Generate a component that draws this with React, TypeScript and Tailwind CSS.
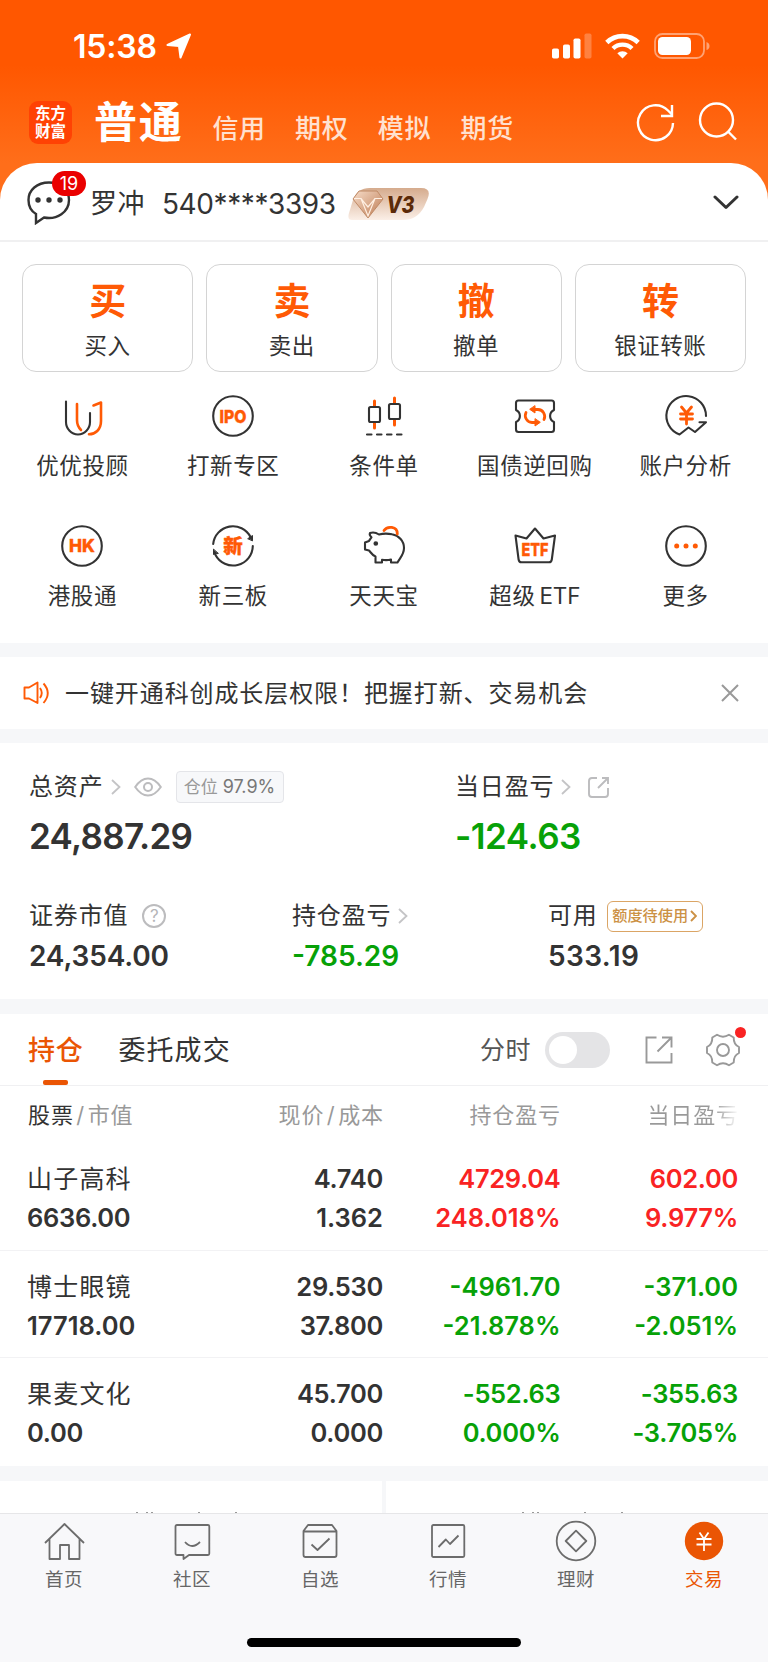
import type { ReactNode } from "react";

const DARK = "#333333";
const ORANGE = "#ff5a05";

function Svg({ size = 44, children }: { size?: number; children: ReactNode }) {
  return (
    <svg width={size} height={size} viewBox="0 0 44 44" fill="none" stroke={DARK} strokeWidth="2.1" strokeLinecap="round" strokeLinejoin="round" className="shrink-0">
      {children}
    </svg>
  );
}

function IconWord({ children, y, size, length }: { children: string; y: number; size: number; length: number }) {
  return (
    <text x="22" y={y} textAnchor="middle" textLength={length} lengthAdjust="spacingAndGlyphs" fontSize={size} fontWeight="800" fill={ORANGE} stroke={ORANGE} strokeWidth="0.4">
      {children}
    </text>
  );
}

const shortcuts: { label: ReactNode; icon: ReactNode }[] = [
  {
    label: "优优投顾",
    icon: (
      <Svg>
        <path d="M6 7.500V28A12 12.500 0 0 0 30 28V19" />
        <path stroke={ORANGE} strokeWidth="2.600" d="M17 10V26C17 31 18.500 33.500 21 36M33.500 11.500L41 8.500V27C41 36 35 40.300 29 40.300" />
      </Svg>
    ),
  },
  {
    label: "打新专区",
    icon: (
      <Svg>
        <circle cx="22" cy="22" r="19.800" />
        <IconWord y={28.6} size={18} length={27}>IPO</IconWord>
      </Svg>
    ),
  },
  {
    label: "条件单",
    icon: (
      <Svg>
        <path stroke={ORANGE} strokeWidth="3" d="M12.500 7V12M12.500 29V34M32.500 4V9M32.500 25.500V31" />
        <rect x="7" y="13" width="11" height="15" rx="1.500" />
        <rect x="27" y="10" width="11" height="15" rx="1.500" />
        <path d="M5 40.500H9.500M15 40.500H19.500M25 40.500H29.500M35 40.500H39.500" />
      </Svg>
    ),
  },
  {
    label: "国债逆回购",
    icon: (
      <Svg>
        <path d="M5.500 6.500H38.500Q41 6.500 41 9V16C35.800 18.500 35.800 25.500 41 28V35.500Q41 38 38.500 38H5.500Q3 38 3 35.500V28C8.200 25.500 8.200 18.500 3 16V9Q3 6.500 5.500 6.500Z" />
        <path stroke={ORANGE} strokeWidth="2.800" d="M19 15.500H25A7 7 0 0 1 31 25.500M25 28.500H19A7 7 0 0 1 13 18.500" />
        <path fill={ORANGE} stroke={ORANGE} strokeWidth="1" d="M22 12V19L17 15.500ZM22 25V32L27 28.500Z" />
      </Svg>
    ),
  },
  {
    label: "账户分析",
    icon: (
      <Svg>
        <path d="M42 22A19.800 19.800 0 1 0 15.500 40.500L24.500 33.500L31 38L42 28.300H35.500" />
        <path stroke={ORANGE} strokeWidth="2.800" d="M17.500 13L22.500 19L27.500 13M16.500 20H28.500M16.500 25H28.500M22.500 20V30" />
      </Svg>
    ),
  },
  {
    label: "港股通",
    icon: (
      <Svg>
        <circle cx="22" cy="22" r="19.800" />
        <IconWord y={28.4} size={18} length={26}>HK</IconWord>
      </Svg>
    ),
  },
  {
    label: "新三板",
    icon: (
      <Svg>
        <path d="M2.200 20A19.800 19.800 0 0 1 39.500 13M41.800 22A19.800 19.800 0 0 1 4.500 31" />
        <path fill={DARK} strokeWidth="1" d="M37 14.500L41.500 11.500V16.500ZM7 29.500L2.500 30.500V25.500Z" />
        <IconWord y={29} size={19.5} length={19.5}>新</IconWord>
      </Svg>
    ),
  },
  {
    label: "天天宝",
    icon: (
      <Svg>
        <path d="M8 9C11 8 14 8.500 17 10.500C21 9.500 26 9.500 30 10.300C37 11.500 42 17 42 24C42 30 39.500 32 35.500 38.500H29V35.500C26 36.300 23 36.300 20 35.800V38.500H13.500V32.500C10 31 8.500 28 7 26.500L3 25.500V18.500L7 17C8 15 9 14 9.500 13.200C7.500 11.500 7.500 10 8 9Z" />
        <circle cx="13.800" cy="19.500" r="1.300" fill={DARK} />
        <path stroke={ORANGE} strokeWidth="2.800" d="M22 6.500C25 1.800 35.500 2 35.300 10" />
      </Svg>
    ),
  },
  {
    label: (
      <>
        超级<span className="ml-[4px] tracking-[-0.200px]">ETF</span>
      </>
    ),
    icon: (
      <Svg>
        <path d="M2.500 11.500L13.500 14.500L22 4.500L30.500 14.500L42 11.500L38.800 35.500Q38.400 38.300 36 38.300H8.500Q6 38.300 5.600 35.500Z" />
        <IconWord y={31.6} size={18} length={27}>ETF</IconWord>
      </Svg>
    ),
  },
  {
    label: "更多",
    icon: (
      <Svg>
        <circle cx="22" cy="22" r="19.800" />
        <g fill={ORANGE} stroke="none">
          <circle cx="12.700" cy="22" r="2.500" />
          <circle cx="22" cy="22" r="2.500" />
          <circle cx="31.300" cy="22" r="2.500" />
        </g>
      </Svg>
    ),
  },
];

const trades = [
  ["买", "买入"],
  ["卖", "卖出"],
  ["撤", "撤单"],
  ["转", "银证转账"],
];

const holdings = [
  { name: "山子高科", value: "6636.00", price: "4.740", cost: "1.362", pl: "4729.04", plRate: "248.018%", day: "602.00", dayRate: "9.977%", up: true },
  { name: "博士眼镜", value: "17718.00", price: "29.530", cost: "37.800", pl: "-4961.70", plRate: "-21.878%", day: "-371.00", dayRate: "-2.051%", up: false },
  { name: "果麦文化", value: "0.00", price: "45.700", cost: "0.000", pl: "-552.63", plRate: "0.000%", day: "-355.63", dayRate: "-3.705%", up: false },
];

const tabs: { label: string; icon: ReactNode }[] = [
  { label: "首页", icon: <path d="M3 24L22.500 5L42 24M7.500 20V40H18V26H27V40H37.500V20" /> },
  { label: "社区", icon: <path d="M7 6H38Q39.300 6 39.300 7.500V34.500Q39.300 36 38 36H19L13.500 40V36H7Q5.500 36 5.500 34.500V7.500Q5.500 6 7 6ZM15 23Q22 31 30 23" /> },
  { label: "自选", icon: <path d="M5.500 12L10 6H34L38.500 12V36Q38.500 38 36.500 38H7.500Q5.500 38 5.500 36ZM6 12.500H38M13.500 25.500L19.500 31L31.500 19.500" /> },
  { label: "行情", icon: <path d="M7.500 6H37Q38.300 6 38.300 7.500V36.500Q38.300 38 37 38H7.500Q6 38 6 36.500V7.500Q6 6 7.500 6ZM12.500 28L19.800 20.500L24 25L32.500 16.500" /> },
  { label: "理财", icon: <path d="M41.300 22A19.300 19.300 0 1 1 2.700 22A19.300 19.300 0 1 1 41.300 22ZM22 11.700L32.300 22L22 32.300L11.700 22Z" /> },
  {
    label: "交易",
    icon: (
      <>
        <circle cx="22" cy="22" r="19.200" fill="#ea5504" stroke="none" />
        <path stroke="#ffffff" d="M17.500 13.500L22 20L26.500 13.500M14.500 20H29.500M14.500 25.500H29.500M22 20V32" />
      </>
    ),
  },
];

function Chevron() {
  return (
    <svg width="10" height="16" viewBox="0 0 10 16" fill="none" stroke="#c4c4c6" strokeWidth="1.800" className="shrink-0">
      <path d="M1 1L8.500 8L1 15" />
    </svg>
  );
}

function Label({ children }: { children: ReactNode }) {
  return <span className="whitespace-nowrap text-[24px] tracking-[0.850px]">{children}</span>;
}

function Slash() {
  return <span className="mx-[2.500px]">/</span>;
}

/* The digit 1 is narrow, so only figures without one are tightened. */
function Figure({ children, tone = "" }: { children: string; tone?: string }) {
  return <span className={tone + (children.includes("1") ? " tracking-[0px]" : " tracking-[-0.300px]")}>{children}</span>;
}

export default function App() {
  return (
    <div className="flex h-[1662px] w-[768px] flex-col overflow-hidden bg-white font-['Inter','Noto_Sans_CJK_SC',sans-serif] text-[#333333]">
      <div className="h-[242px] shrink-0 bg-[linear-gradient(180deg,#ff5700_0px,#ff5700_65px,#ff6e1a_163px,#ff6e1a_205px)]">
        <div className="flex h-[90px] items-center pl-[73px] pr-[58px] pt-[2px]">
          <span className="pt-[2px] text-[32px] font-semibold leading-[40px] tracking-[-0.200px] text-white">15:38</span>
          <svg width="26" height="26" viewBox="0 0 26 26" className="ml-[9px]" fill="#ffffff" stroke="#ffffff" strokeWidth="2" strokeLinejoin="round">
            <path d="M24 1.500L14.500 24.500L13 13L1.500 12Z" />
          </svg>
          <svg width="40" height="26" viewBox="0 0 40 26" fill="#ffffff" className="ml-auto">
            <rect x="0" y="15.500" width="7" height="10" rx="1.800" />
            <rect x="11" y="11.500" width="7" height="14" rx="1.800" />
            <rect x="21.500" y="5.500" width="7" height="20" rx="1.800" />
            <rect x="32.500" y="0.500" width="7" height="25" rx="1.800" opacity="0.250" />
          </svg>
          <svg width="35" height="26" viewBox="0 0 35 26" fill="none" stroke="#ffffff" className="ml-[13px]">
            <path strokeWidth="4.600" d="M1.800 9.500A22.500 22.500 0 0 1 33.200 9.500" />
            <path strokeWidth="4.400" d="M8 15.500A13.600 13.600 0 0 1 27 15.500" />
            <path fill="#ffffff" stroke="none" d="M12.300 20.300A7.600 7.600 0 0 1 22.700 20.300L17.500 25.600Z" />
          </svg>
          <svg width="56" height="26" viewBox="0 0 56 26" fill="none" className="ml-[14px]">
            <rect x="1" y="1" width="49" height="24" rx="7.500" stroke="#ffffff" strokeOpacity="0.450" strokeWidth="1.800" />
            <rect x="4" y="4" width="33" height="18" rx="4.500" fill="#ffffff" />
            <path d="M52.500 9Q55.500 10 55.500 13Q55.500 16 52.500 17Z" fill="#ffffff" fillOpacity="0.450" />
          </svg>
        </div>
        <div className="flex h-[73px] items-start pl-[29px] pr-[30px]">
          <div className="mt-[11px] flex h-[43px] w-[43px] flex-col items-center justify-center rounded-[9px] bg-[#ff4204] text-[15.500px] font-bold leading-[18px] text-white">
            <span>东方</span>
            <span>财富</span>
          </div>
          <span className="ml-[22px] mt-[7px] text-[43px] font-bold leading-[50px] tracking-[1.700px] text-white">普通</span>
          <div className="ml-[29px] mt-[20px] flex gap-[29.300px] text-[26px] font-medium leading-[38px] tracking-[0.700px] text-[#ffe1d0]">
            <span>信用</span>
            <span>期权</span>
            <span>模拟</span>
            <span>期货</span>
          </div>
          <svg width="40" height="40" viewBox="0 0 40 40" fill="none" stroke="#ffffff" strokeWidth="2.400" className="ml-auto mt-[12px]">
            <path d="M38 21A17.500 17.500 0 1 1 33 8.500L37 12.500M37 3V14H26" />
          </svg>
          <svg width="40" height="40" viewBox="0 0 40 40" fill="none" stroke="#ffffff" strokeWidth="2.400" className="ml-[23px] mt-[12px]">
            <circle cx="18.500" cy="18" r="16.500" />
            <path d="M30 29.500L38 37.500" />
          </svg>
        </div>
        <div className="flex h-[79px] items-center rounded-t-[37px] border-b-2 border-[#f0f0f1] bg-white pl-[26px] pr-[29px] pt-[3px]">
          <div className="relative -mt-px h-[44px] w-[46px] shrink-0">
            <svg width="46" height="44" viewBox="0 0 46 44" fill="none" stroke={DARK} strokeWidth="2.400">
              <path d="M23 1.500C11 1.500 2.500 9 2.500 19C2.500 25 5 30 10 33V42L18 36.500C31 39 43 31 43 19C43 9 34.500 1.500 23 1.500Z" />
              <g fill={DARK} stroke="none">
                <circle cx="12" cy="19" r="2.700" />
                <circle cx="23" cy="19" r="2.700" />
                <circle cx="34" cy="19" r="2.700" />
              </g>
            </svg>
            <span className="absolute -top-[10px] left-[26px] flex h-[25px] w-[34px] items-center justify-center rounded-full bg-[#ea0000] text-[18px] text-white">19</span>
          </div>
          <span className="ml-[18px] pt-px text-[27px] leading-[38px] tracking-[0.500px]">罗冲</span>
          <span className="ml-[17px] pt-px text-[28px] leading-[38px] tracking-[-0.400px]">540****3393</span>
          <svg width="83" height="33" viewBox="0 0 83 33" className="ml-[12px]">
            <defs>
              <linearGradient id="tier" x1="0" y1="0" x2="0" y2="1">
                <stop offset="0" stopColor="#d5ab8d" />
                <stop offset="1" stopColor="#fbefe7" />
              </linearGradient>
              <linearGradient id="gem" x1="0" y1="0" x2="1" y2="1">
                <stop offset="0" stopColor="#f6dcc8" />
                <stop offset="1" stopColor="#bd7a52" />
              </linearGradient>
            </defs>
            <path fill="url(#tier)" d="M22 1H73Q84 1 79.500 12L76 20Q69 33 55 33H4Q-1 33 1 26L5 13Q9 1 22 1Z" />
            <path fill="url(#gem)" stroke="#c08a66" strokeWidth="1" d="M11 4H29L35 12L20 31L5 12Z" />
            <path fill="none" stroke="#fff0e3" strokeWidth="1.200" d="M6 11.500H13L20 20L27 11.500H34M13 11.500L20 29L27 11.500" />
            <text x="38.500" y="25.500" fontSize="23" fontWeight="800" fontStyle="italic" fill="#5c2a08" textLength="28" lengthAdjust="spacingAndGlyphs">V3</text>
          </svg>
          <svg width="26" height="16" viewBox="0 0 26 16" fill="none" stroke={DARK} strokeWidth="3" strokeLinecap="round" strokeLinejoin="round" className="ml-auto">
            <path d="M2 2L13 12.500L24 2" />
          </svg>
        </div>
      </div>

      <div className="flex h-[130px] shrink-0 gap-[13px] px-[22px] pt-[22px]">
        {trades.map(([mark, label]) => (
          <div key={label} className="flex h-[108px] flex-1 flex-col items-center rounded-[14px] border border-[#d4d4d4]">
            <span className="mt-[15px] text-[37px] font-bold leading-[44px] text-[#ff5a05]">{mark}</span>
            <span className="mt-[7px] text-[22.500px] leading-[30px] tracking-[0.500px]">{label}</span>
          </div>
        ))}
      </div>

      <div className="grid h-[271px] shrink-0 auto-rows-[129.500px] grid-cols-5 px-[7px] pt-[22px]">
        {shortcuts.map((s, i) => (
          <div key={i} className="flex flex-col items-center">
            {s.icon}
            <span className="mt-[13px] whitespace-nowrap text-[22.500px] leading-[30px] tracking-[0.600px]">{s.label}</span>
          </div>
        ))}
      </div>

      <div className="flex h-[100px] shrink-0 items-center border-y-[14px] border-[#f6f7f9] pl-[23px] pr-[29px]">
        <svg width="26" height="24" viewBox="0 0 26 24" fill="none" stroke={ORANGE} strokeWidth="1.900" strokeLinejoin="round">
          <path d="M1.500 6.500H6L14.500 1.500V22L6 17.500H1.500ZM17 7Q20.500 12 17 17M20.500 2.500Q29 12 20.500 22" />
        </svg>
        <span className="ml-[16px] whitespace-nowrap pt-px text-[24px] leading-[36px] tracking-[0.910px]">一键开通科创成长层权限！把握打新、交易机会</span>
        <svg width="18" height="18" viewBox="0 0 18 18" stroke="#999999" strokeWidth="2" className="ml-auto">
          <path d="M1 1L17 17M17 1L1 17" />
        </svg>
      </div>

      <div className="h-[256px] shrink-0 pt-[27px] leading-[34px]">
        <div className="flex">
          <div className="w-[427px] pl-[29px]">
            <div className="flex h-[34px] items-center">
              <Label>总资产</Label>
              <span className="ml-[7px]"><Chevron /></span>
              <svg width="28" height="20" viewBox="0 0 28 20" fill="none" stroke="#bcbcbe" strokeWidth="2" className="ml-[13px]">
                <path d="M1.200 10Q7 1.500 14 1.500Q21 1.500 26.800 10Q21 18.500 14 18.500Q7 18.500 1.200 10Z" />
                <circle cx="14" cy="10" r="4" />
              </svg>
              <span className="ml-[14px] flex h-[32px] w-[108px] items-center justify-center whitespace-nowrap rounded-[4px] border border-[#e4e5e9] bg-[#f7f8fa] text-[17px] text-[#999999]">
                仓位&nbsp;<span className="text-[18px] text-[#777777]">97.9%</span>
              </span>
            </div>
            <div className="mt-[12px] text-[35px] font-semibold leading-[40px] tracking-[-0.700px]">24,887.29</div>
          </div>
          <div className="flex-1 pl-[28px]">
            <div className="flex h-[34px] items-center">
              <Label>当日盈亏</Label>
              <span className="ml-[7px]"><Chevron /></span>
              <svg width="21" height="21" viewBox="0 0 21 21" fill="none" stroke="#bcbcbe" strokeWidth="1.900" className="ml-[17px]">
                <path d="M9 1H4Q1 1 1 4V17Q1 20 4 20H17Q20 20 20 17V11M10 11L19.500 1.500M14 1H20V7" />
              </svg>
            </div>
            <div className="mt-[12px] text-[35px] font-semibold leading-[40px] tracking-[-0.500px] text-[#07a107]">-124.63</div>
          </div>
        </div>
        <div className="mt-[43px] flex">
          <div className="w-[264px] pl-[29px]">
            <div className="flex h-[34px] items-center">
              <Label>证券市值</Label>
              <span className="ml-[14px] flex h-[24px] w-[24px] items-center justify-center rounded-full border-2 border-[#bcbcbe] text-[17px] text-[#b5b5b7]">?</span>
            </div>
            <div className="mt-[6px] text-[28px] font-semibold tracking-[-0.150px]">24,354.00</div>
          </div>
          <div className="w-[256px] pl-[28px]">
            <div className="flex h-[34px] items-center">
              <Label>持仓盈亏</Label>
              <span className="ml-[7px]"><Chevron /></span>
            </div>
            <div className="mt-[6px] text-[28px] font-semibold text-[#07a107]">-785.29</div>
          </div>
          <div className="pl-[28px]">
            <div className="flex h-[34px] items-center">
              <Label>可用</Label>
              <span className="ml-[9px] flex h-[31px] w-[96px] items-center justify-center gap-[2px] rounded-[6px] border border-[#dba565] text-[15.200px] font-medium text-[#cc9145]">
                额度待使用
                <svg width="7" height="12" viewBox="0 0 7 12" fill="none" stroke="#cc9145" strokeWidth="1.900">
                  <path d="M1 1L6 6L1 11" />
                </svg>
              </span>
            </div>
            <div className="mt-[6px] text-[28px] font-semibold tracking-[0.400px]">533.19</div>
          </div>
        </div>
      </div>

      <div className="flex h-[87px] shrink-0 items-center border-b border-t-[15px] border-b-[#f0f0f2] border-t-[#f6f7f9] pl-[28px] pr-[28px]">
        <div className="relative flex h-full items-center pt-[3px] text-[27px] font-medium tracking-[0.700px] text-[#ea5504]">
          持仓
          <span className="absolute bottom-0 left-[15px] h-[5px] w-[25px] rounded-[2px] bg-[#ea5504]" />
        </div>
        <span className="ml-[35px] pt-[3px] text-[27px] tracking-[1.100px]">委托成交</span>
        <span className="ml-auto pt-[2px] text-[25px] tracking-[0.500px] text-[#555555]">分时</span>
        <span className="ml-[14px] flex h-[36px] w-[65px] items-center rounded-full bg-[#e4e4e6] pl-[4px]">
          <span className="h-[28px] w-[28px] rounded-full bg-white" />
        </span>
        <svg width="28" height="28" viewBox="0 0 28 28" fill="none" stroke="#999999" strokeWidth="1.900" className="ml-[35px]">
          <path d="M11.500 1.500H1.500V26.500H26.500V17M12.500 15.500L26 2M17 1.500H26.500V11.500" />
        </svg>
        <div className="relative ml-[33px] h-[34px] w-[34px]">
          <svg width="34" height="34" viewBox="0 0 34 34" fill="none" stroke="#999999" strokeWidth="1.900" strokeLinejoin="round">
            <path d="M11 1.800Q17 5.600 23 1.800L27.700 4.500Q27.500 11.500 33 14V20Q27.500 22.500 27.700 29.500L23 32.200Q17 28.400 11 32.200L6.300 29.500Q6.500 22.500 1 20V14Q6.500 11.500 6.300 4.500Z" />
            <circle cx="17" cy="17" r="6" />
          </svg>
          <span className="absolute -top-[6px] left-[29px] h-[11px] w-[11px] rounded-full bg-[#f92323]" />
        </div>
      </div>

      <div className="grid h-[57px] shrink-0 grid-cols-[200px_156px_177px_178px] items-center whitespace-nowrap pl-[28px] pt-[2px] text-right text-[22px] tracking-[0.900px] text-[#999999]">
        <span className="text-left"><span className="text-[#333333]">股票</span><Slash />市值</span>
        <span>现价<Slash />成本</span>
        <span>持仓盈亏</span>
        <span className="bg-[linear-gradient(90deg,#999999_86%,#ffffff_100%)] bg-clip-text text-transparent">当日盈亏</span>
      </div>

      {holdings.map((h, i) => {
        const tone = h.up ? "text-[#f92323]" : "text-[#07a107]";
        return (
          <div
            key={h.name}
            className={
              "grid h-[107.700px] shrink-0 grid-cols-[200px_156px_177.500px_177.500px] grid-rows-[39px_39px] pl-[27px] pt-[16px] text-right text-[25.500px] font-semibold leading-[39px] " +
              (i < 2 ? "border-b border-[#f2f2f4]" : "")
            }
          >
            <span className="pt-px text-left text-[25px] font-normal tracking-[1.200px]">{h.name}</span>
            <Figure>{h.price}</Figure>
            <Figure tone={tone}>{h.pl}</Figure>
            <Figure tone={tone}>{h.day}</Figure>
            <Figure tone="text-left">{h.value}</Figure>
            <Figure>{h.cost}</Figure>
            <Figure tone={tone}>{h.plRate}</Figure>
            <Figure tone={tone}>{h.dayRate}</Figure>
          </div>
        );
      })}

      <div className="flex h-[47px] shrink-0 gap-[4px] border-t-[15px] border-[#f6f7f9] bg-[#f6f7f9]">
        {[0, 1].map((n) => (
          <div key={n} className="flex flex-1 items-end justify-center bg-white">
            <svg width="118" height="1" viewBox="0 0 118 1" stroke="#999999" strokeWidth="1">
              <path d="M4 0.500H6M14 0.500H16M19 0.500H21M66 0.500H68M103 0.500H105" />
            </svg>
          </div>
        ))}
      </div>

      <div className="flex h-[150px] shrink-0 flex-col items-center border-t border-[#e6e6e8] bg-[#f8f8fa]">
        <div className="flex w-full pt-[5px]">
          {tabs.map((t, i) => (
            <div key={t.label} className={"flex flex-1 flex-col items-center " + (i === 5 ? "text-[#ea5504]" : "text-[#666666]")}>
              <svg width="44" height="44" viewBox="0 0 44 44" fill="none" stroke="#6c6c6c" strokeWidth="1.800" strokeLinejoin="round">
                {t.icon}
              </svg>
              <span className="mt-[3px] text-[18.500px] leading-[26px] tracking-[0.400px]">{t.label}</span>
            </div>
          ))}
        </div>
        <div className="mt-[46px] h-[9px] w-[274px] rounded-full bg-black" />
      </div>
    </div>
  );
}
